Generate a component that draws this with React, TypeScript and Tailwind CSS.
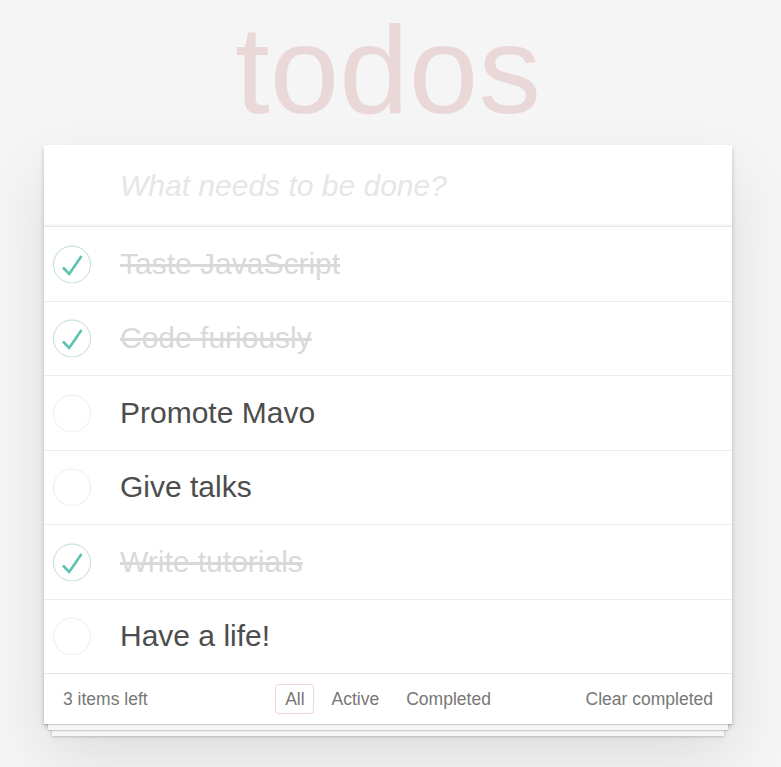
import React from "react";

type Todo = { title: string; done: boolean };

const todos: Todo[] = [
  { title: "Taste JavaScript", done: true },
  { title: "Code furiously", done: true },
  { title: "Promote Mavo", done: false },
  { title: "Give talks", done: false },
  { title: "Write tutorials", done: true },
  { title: "Have a life!", done: false },
];

function Toggle({ checked }: { checked: boolean }) {
  return (
    <svg width="38" height="38" viewBox="0 0 38 38" className="shrink-0">
      <circle
        cx="19"
        cy="19.5"
        r="18.5"
        fill="none"
        stroke={checked ? "#bddad5" : "#ededed"}
        strokeWidth="1"
      />
      {checked && (
        <polyline
          points="10,22.5 16.2,29 28.5,11"
          fill="none"
          stroke="#5dc2af"
          strokeWidth="2.6"
          strokeLinecap="butt"
          strokeLinejoin="miter"
        />
      )}
    </svg>
  );
}

export default function App() {
  return (
    <div className="min-h-screen bg-[#f5f5f5] font-['Liberation_Sans',Arial,sans-serif] text-[#4d4d4d]">
      <div className="ml-[44px] w-[688px]">
        <h1 className="h-[140px] text-center text-[125px] font-normal leading-[140px] text-[rgba(175,47,47,0.15)]">
          todos
        </h1>
        <section className="relative mt-[5px] bg-white shadow-[0_2.5px_5px_rgba(0,0,0,0.2),0_31px_62px_rgba(0,0,0,0.1)]">
          <header className="h-[81px] shadow-[inset_0_-2px_1px_rgba(0,0,0,0.03)]">
            <input
              className="h-full w-full bg-transparent pl-[76px] pr-[20px] text-[30px] leading-[1.4] text-[#4d4d4d] outline-none placeholder:italic placeholder:text-[#e6e6e6]"
              placeholder="What needs to be done?"
            />
          </header>
          <ul className="border-t border-[#e6e6e6]">
            {todos.map((t, i) => (
              <li
                key={t.title}
                className={
                  i === todos.length - 1
                    ? "flex h-[73.5px] items-center"
                    : "flex h-[74.5px] items-center border-b border-[#ededed]"
                }
              >
                <div className="ml-[9px]">
                  <Toggle checked={t.done} />
                </div>
                <label
                  className={
                    t.done
                      ? "ml-[29px] text-[30px] leading-[1.2] text-[#d9d9d9] line-through"
                      : "ml-[29px] text-[30px] leading-[1.2] text-[#4d4d4d]"
                  }
                >
                  {t.title}
                </label>
              </li>
            ))}
          </ul>
          <footer className="relative h-[51px] border-t border-[#e6e6e6] px-[19px] text-[17.5px] text-[#777]">
            <div className="pointer-events-none absolute inset-x-0 bottom-0 h-[50px] shadow-[0_1.25px_1.25px_rgba(0,0,0,0.2),0_10px_0_-4px_#f6f6f6,0_11px_1.25px_-4px_rgba(0,0,0,0.2),0_20px_0_-8px_#f6f6f6,0_21px_2.5px_-8px_rgba(0,0,0,0.2)]" />
            <div className="relative grid h-full grid-cols-[1fr_auto_1fr] items-center">
              <span className="leading-[20px]">3 items left</span>
              <ul className="flex items-center gap-[7.5px]">
                <li>
                  <a className="block rounded-[3.75px] border border-[rgba(175,47,47,0.2)] px-[8.75px] py-[3.75px] leading-[20.5px]">
                    All
                  </a>
                </li>
                <li>
                  <a className="block rounded-[3.75px] border border-transparent px-[8.75px] py-[3.75px] leading-[20.5px]">
                    Active
                  </a>
                </li>
                <li>
                  <a className="block rounded-[3.75px] border border-transparent px-[8.75px] py-[3.75px] leading-[20.5px]">
                    Completed
                  </a>
                </li>
              </ul>
              <span className="text-right leading-[20px]">Clear completed</span>
            </div>
          </footer>
        </section>
      </div>
    </div>
  );
}
